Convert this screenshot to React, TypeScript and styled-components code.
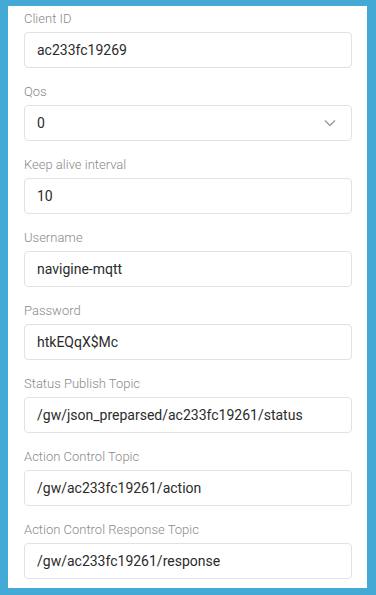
import React from 'react';
import styled, {createGlobalStyle} from 'styled-components';

const GlobalStyle = createGlobalStyle`
  html, body {
    margin: 0;
    padding: 0;
    background: #45a9d6;
  }
  * {
    box-sizing: border-box;
  }
`;

const Frame = styled.div`
  width: 376px;
  height: 595px;
  padding: 6px 9px 7px 8px;
  background: #45a9d6;
`;

const Panel = styled.div`
  height: 100%;
  background: #fff;
  padding: 4px 15px 0 16px;
  font-family: Roboto, "Liberation Sans", sans-serif;
  overflow: hidden;
`;

const Field = styled.div`
  display: flex;
  flex-direction: column;
  margin-bottom: 15px;
`;

const Label = styled.label`
  font-size: 13px;
  font-weight: 300;
  line-height: 18px;
  color: #8a8a8a;
  margin-bottom: 4px;
`;

const InputBox = styled.div`
  position: relative;
  display: flex;
  align-items: center;
  height: 36px;
  padding: 0 12px;
  border: 1px solid #e2e2e2;
  border-radius: 4px;
  font-size: 14px;
  color: #2b2b2b;
`;

const Chevron = styled.svg`
  position: absolute;
  right: 15px;
  top: 50%;
  transform: translateY(-50%);
`;

const fields: {label: string; value: string; select?: boolean}[] = [
  {label: 'Client ID', value: 'ac233fc19269'},
  {label: 'Qos', value: '0', select: true},
  {label: 'Keep alive interval', value: '10'},
  {label: 'Username', value: 'navigine-mqtt'},
  {label: 'Password', value: 'htkEQqX$Mc'},
  {label: 'Status Publish Topic', value: '/gw/json_preparsed/ac233fc19261/status'},
  {label: 'Action Control Topic', value: '/gw/ac233fc19261/action'},
  {label: 'Action Control Response Topic', value: '/gw/ac233fc19261/response'},
];

export default function App(): JSX.Element {
  return (
    <>
      <GlobalStyle />
      <Frame>
        <Panel>
          {fields.map((f) => (
            <Field key={f.label}>
              <Label>{f.label}</Label>
              <InputBox>
                <span>{f.value}</span>
                {f.select && (
                  <Chevron width="12" height="8" viewBox="0 0 12 8">
                    <path d="M1 1.5 L6 6.5 L11 1.5" fill="none" stroke="#9a9a9a" strokeWidth="1.3" />
                  </Chevron>
                )}
              </InputBox>
            </Field>
          ))}
        </Panel>
      </Frame>
    </>
  );
}
